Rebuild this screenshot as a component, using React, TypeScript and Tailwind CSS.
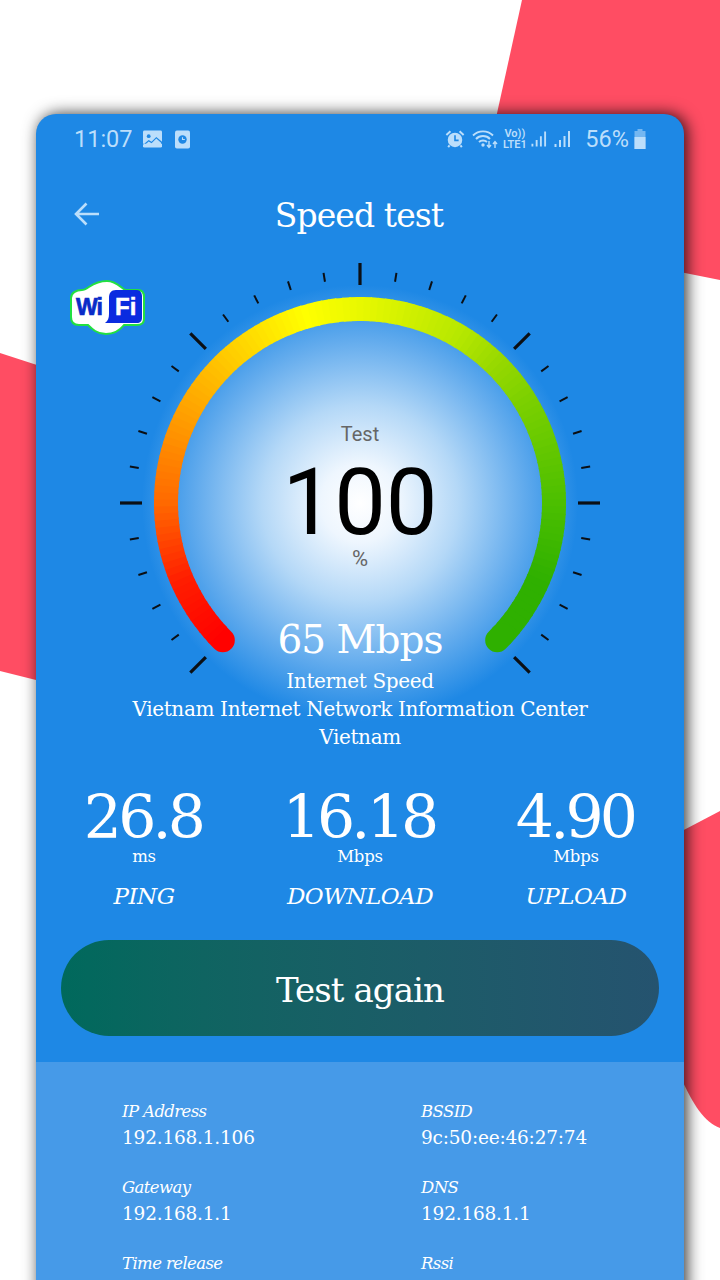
import React from "react";

const serif = "font-['DejaVu_Serif',serif]";

const STOPS: [number, number[]][] = [
  [0, [255, 0, 0]],
  [0.08, [255, 30, 0]],
  [0.167, [255, 105, 0]],
  [0.285, [255, 170, 0]],
  [0.44, [255, 255, 0]],
  [0.5, [232, 248, 0]],
  [0.61, [184, 232, 0]],
  [0.667, [150, 216, 0]],
  [0.715, [124, 208, 0]],
  [0.833, [76, 191, 0]],
  [0.92, [47, 176, 0]],
  [1, [47, 176, 0]],
];

function colorAt(t: number) {
  for (let i = 1; i < STOPS.length; i++) {
    const [a, ca] = STOPS[i - 1];
    const [b, cb] = STOPS[i];
    if (t <= b) {
      const k = (t - a) / (b - a);
      const c = ca.map((v, j) => Math.round(v + (cb[j] - v) * k));
      return `rgb(${c[0]},${c[1]},${c[2]})`;
    }
  }
  return "rgb(47,176,0)";
}

const CX = 324;
const CY = 263;
const pt = (deg: number, r: number) => {
  const a = ((deg - 90) * Math.PI) / 180;
  return [CX + r * Math.cos(a), CY + r * Math.sin(a)];
};

function Gauge() {
  const segs = [];
  const N = 135;
  for (let i = 0; i < N; i++) {
    const d0 = -135 + (270 * i) / N;
    const d1 = -135 + (270 * (i + 1)) / N + 0.4;
    const [x0, y0] = pt(d0, 194);
    const [x1, y1] = pt(Math.min(d1, 135), 194);
    segs.push(
      <path
        key={i}
        d={`M${x0} ${y0}A194 194 0 0 1 ${x1} ${y1}`}
        stroke={colorAt((i + 0.5) / N)}
        strokeWidth={24}
        fill="none"
        strokeLinecap={i === 0 || i === N - 1 ? "round" : "butt"}
      />
    );
  }
  const ticks = [];
  for (let k = -15; k <= 15; k++) {
    const deg = k * 9;
    const major = k % 5 === 0;
    const [x0, y0] = pt(deg, major ? 218 : 224);
    const [x1, y1] = pt(deg, major ? 240 : 233);
    ticks.push(
      <line key={k} x1={x0} y1={y0} x2={x1} y2={y1} stroke="#0b0f14" strokeWidth={major ? 3.2 : 2} />
    );
  }
  return (
    <svg className="absolute left-0 top-0" width="648" height="500" viewBox="0 0 648 500">
      <defs>
        <radialGradient id="glow" cx="324" cy="263" r="218" gradientUnits="userSpaceOnUse">
          <stop offset="0" stopColor="#ffffff" />
          <stop offset="0.18" stopColor="#eef6fe" />
          <stop offset="0.45" stopColor="#b4d8f7" />
          <stop offset="0.75" stopColor="#62abed" />
          <stop offset="1" stopColor="#1e88e5" />
        </radialGradient>
      </defs>
      <circle cx={CX} cy={CY} r="218" fill="url(#glow)" />
      {ticks}
      {segs}
    </svg>
  );
}

function WifiLogo() {
  return (
    <svg className="absolute left-[34px] top-[40px]" width="76" height="56" viewBox="0 0 76 56">
      <path
        d="M12 10C18 10 22 1 37 1C46 1 50 7 55 10H68C72 10 74 13 74 17V39C74 43 71 45 67 45H54C50 50 45 54 36 54C27 54 22 49 18 45H9C4 45 1 42 1 37V18C1 13 6 10 12 10Z"
        fill="#ffffff"
        stroke="#22e040"
        strokeWidth="2"
      />
      <path
        d="M46 10H67C70 10 72 13 72 16V38C72 41 70 43 67 43H35C38 41 39 38 39 34V18C39 13 41 10 46 10Z"
        fill="#0a2be0"
      />
      <text
        x="6"
        y="35"
        fontFamily="'Liberation Sans',sans-serif"
        fontWeight="700"
        fontSize="23"
        letterSpacing="-1"
        fill="#0a2bc8"
        stroke="#0a2bc8"
        strokeWidth="0.7"
      >
        Wi
      </text>
      <text
        x="45"
        y="35"
        fontFamily="'Liberation Sans',sans-serif"
        fontWeight="700"
        fontSize="24"
        fill="#ffffff"
        stroke="#ffffff"
        strokeWidth="0.5"
      >
        Fi
      </text>
    </svg>
  );
}

function StatusBar() {
  const c = "#bbdefb";
  return (
    <div className="flex h-[50px] items-center justify-between pl-[38px] pr-[37px] text-[#bbdefb] font-['Roboto',sans-serif]">
      <div className="flex items-center">
        <span className="pt-[2px] text-[23.5px] leading-none">11:07</span>
        <svg className="ml-[10px]" width="19" height="18" viewBox="0 0 20 18">
          <rect width="20" height="18" rx="1.5" fill={c} />
          <circle cx="6" cy="6" r="2" fill="#1e88e5" />
          <path d="M0 15L6 10L9 12L14 7L20 12V14H0Z" fill="#1e88e5" />
          <path d="M1 16L6 11.5L9 13.5L14 8.5L19 13V16Z" fill={c} />
        </svg>
        <svg className="ml-[13px]" width="15" height="19" viewBox="0 0 16 19">
          <rect width="16" height="19" rx="2" fill={c} />
          <circle cx="8" cy="9.5" r="4.5" fill="#1e88e5" />
          <path d="M8 7V9.5H10.5" stroke={c} strokeWidth="1.2" fill="none" />
        </svg>
      </div>
      <div className="flex items-center">
        <svg width="20" height="20" viewBox="0 0 22 20">
          <circle cx="11" cy="11" r="8" fill={c} />
          <path d="M11 6V11.5H15" stroke="#1e88e5" strokeWidth="1.8" fill="none" />
          <path d="M1.5 5.5L6 1.5M20.5 5.5L16 1.5M5 17L3.5 19M17 17L18.5 19" stroke={c} strokeWidth="2.2" />
        </svg>
        <svg className="ml-[7px]" width="26" height="20" viewBox="0 0 26 20">
          <path d="M1 6.5C6.5 1 15.5 1 21 6.5M4 10C7.5 6 14.5 6 18 10M7 13C9 11 13 11 15 13" stroke={c} strokeWidth="1.9" fill="none" />
          <circle cx="11" cy="16" r="1.7" fill={c} />
          <path d="M17 12V18M15 16L17 18.5L19 16M23 19V13M21 15L23 12.5L25 15" stroke={c} strokeWidth="1.4" fill="none" />
        </svg>
        <div className="ml-[5px] flex w-[23px] flex-col items-center text-[11px] font-semibold leading-[11px]">
          <span>Vo))</span>
          <span>LTE1</span>
        </div>
        <svg className="ml-[5px]" width="16" height="18" viewBox="0 0 17 18">
          <path d="M1.5 14V17M6 10V17M10.5 6V17M15 1V17" stroke={c} strokeWidth="2" />
        </svg>
        <svg className="ml-[7px]" width="17" height="18" viewBox="0 0 17 18">
          <path d="M1.5 14V17M6 10V17M10.5 6V17M15 1V17" stroke={c} strokeWidth="2" />
        </svg>
        <span className="ml-[14px] pt-[2px] text-[23.5px] leading-none">56%</span>
        <svg className="ml-[4px]" width="14" height="20" viewBox="0 0 13 20">
          <path d="M4 0H9V2H12V20H1V2H4Z" fill={c} fillOpacity="0.55" />
          <rect x="1" y="8" width="11" height="12" fill={c} />
        </svg>
      </div>
    </div>
  );
}

function Stat({ value, unit, label }: { value: string; unit: string; label: string }) {
  return (
    <div className="flex flex-col items-center text-white">
      <span className="pr-[2px] text-[60px] leading-[60px] tracking-[-3.8px]">{value}</span>
      <span className="text-[16.5px] leading-[20px] tracking-[-0.2px]">{unit}</span>
      <span className="mt-[14px] text-[23px] italic leading-[30px] tracking-[-0.5px]">{label}</span>
    </div>
  );
}

function Info({ label, value }: { label: string; value: string }) {
  return (
    <div className="text-white">
      <div className="h-[26px] text-[16.5px] italic leading-[26px] tracking-[-0.6px]">{label}</div>
      <div className="h-[26px] text-[18.5px] leading-[26px] tracking-[-0.2px]">{value}</div>
    </div>
  );
}

export default function App() {
  return (
    <div className={`relative h-[1280px] w-[720px] overflow-hidden bg-white ${serif}`}>
      <svg className="absolute left-0 top-0" width="720" height="1280" viewBox="0 0 720 1280">
        <path d="M522 0H720V280L680 272L490 145Z" fill="#ff4d63" />
        <path d="M0 353L40 366V681L0 671Z" fill="#ff4d63" />
        <path d="M680 832L720 811V1128C704 1122 694 1106 680 1076Z" fill="#ff4d63" />
      </svg>
      <div className="absolute left-[36px] top-[114px] h-[1200px] w-[648px] overflow-hidden rounded-t-[20px] bg-[#1e88e5] shadow-[3px_0_16px_rgba(0,0,0,0.8)]">
        <StatusBar />
        <div className="relative mt-[26px] flex h-[50px] items-center justify-center">
          <svg className="absolute left-[37px] top-[11px]" width="28" height="26" viewBox="0 0 28 26" fill="none">
            <path d="M26 13H3M13.5 2.5L3 13L13.5 23.5" stroke="#bbdefb" strokeWidth="2.6" />
          </svg>
          <span className="pr-[2px] text-[33px] leading-none tracking-[-0.9px] text-white">Speed test</span>
        </div>
        <div className="relative h-[376px]">
          <Gauge />
          <WifiLogo />
          <div className="relative flex flex-col items-center pt-[182px] font-['Roboto',sans-serif]">
            <span className="text-[20px] leading-[24px] text-[#666666]">Test</span>
            <span className="mt-[15px] text-[92px] leading-[84px] text-black">100</span>
            <span className="mt-[2px] text-[22px] leading-[24px] text-[#666666]">%</span>
          </div>
        </div>
        <div className="relative flex flex-col items-center text-white">
          <span className="text-[39px] leading-[48px] tracking-[-1px]">65 Mbps</span>
          <span className="mt-[3px] text-[20px] leading-[28px] tracking-[-0.35px]">Internet Speed</span>
          <span className="text-[20px] leading-[28px] tracking-[-0.35px]">Vietnam Internet Network Information Center</span>
          <span className="text-[20px] leading-[28px] tracking-[-0.35px]">Vietnam</span>
        </div>
        <div className="relative mt-[36px] grid grid-cols-3">
          <Stat value="26.8" unit="ms" label="PING" />
          <Stat value="16.18" unit="Mbps" label="DOWNLOAD" />
          <Stat value="4.90" unit="Mbps" label="UPLOAD" />
        </div>
        <div className="mx-[25px] mt-[29px] flex h-[96px] items-center justify-center rounded-[48px] bg-gradient-to-r from-[#00695c] to-[#25536f] pt-[3px]">
          <span className="text-[34px] leading-none tracking-[-0.9px] text-white">Test again</span>
        </div>
        <div className="mt-[26px] h-[300px] bg-[#469ae8] pl-[86px] pt-[37px]">
          <div className="grid grid-cols-[299px_1fr] gap-y-[24px]">
            <Info label="IP Address" value="192.168.1.106" />
            <Info label="BSSID" value="9c:50:ee:46:27:74" />
            <Info label="Gateway" value="192.168.1.1" />
            <Info label="DNS" value="192.168.1.1" />
            <Info label="Time release" value="" />
            <Info label="Rssi" value="" />
          </div>
        </div>
      </div>
    </div>
  );
}
